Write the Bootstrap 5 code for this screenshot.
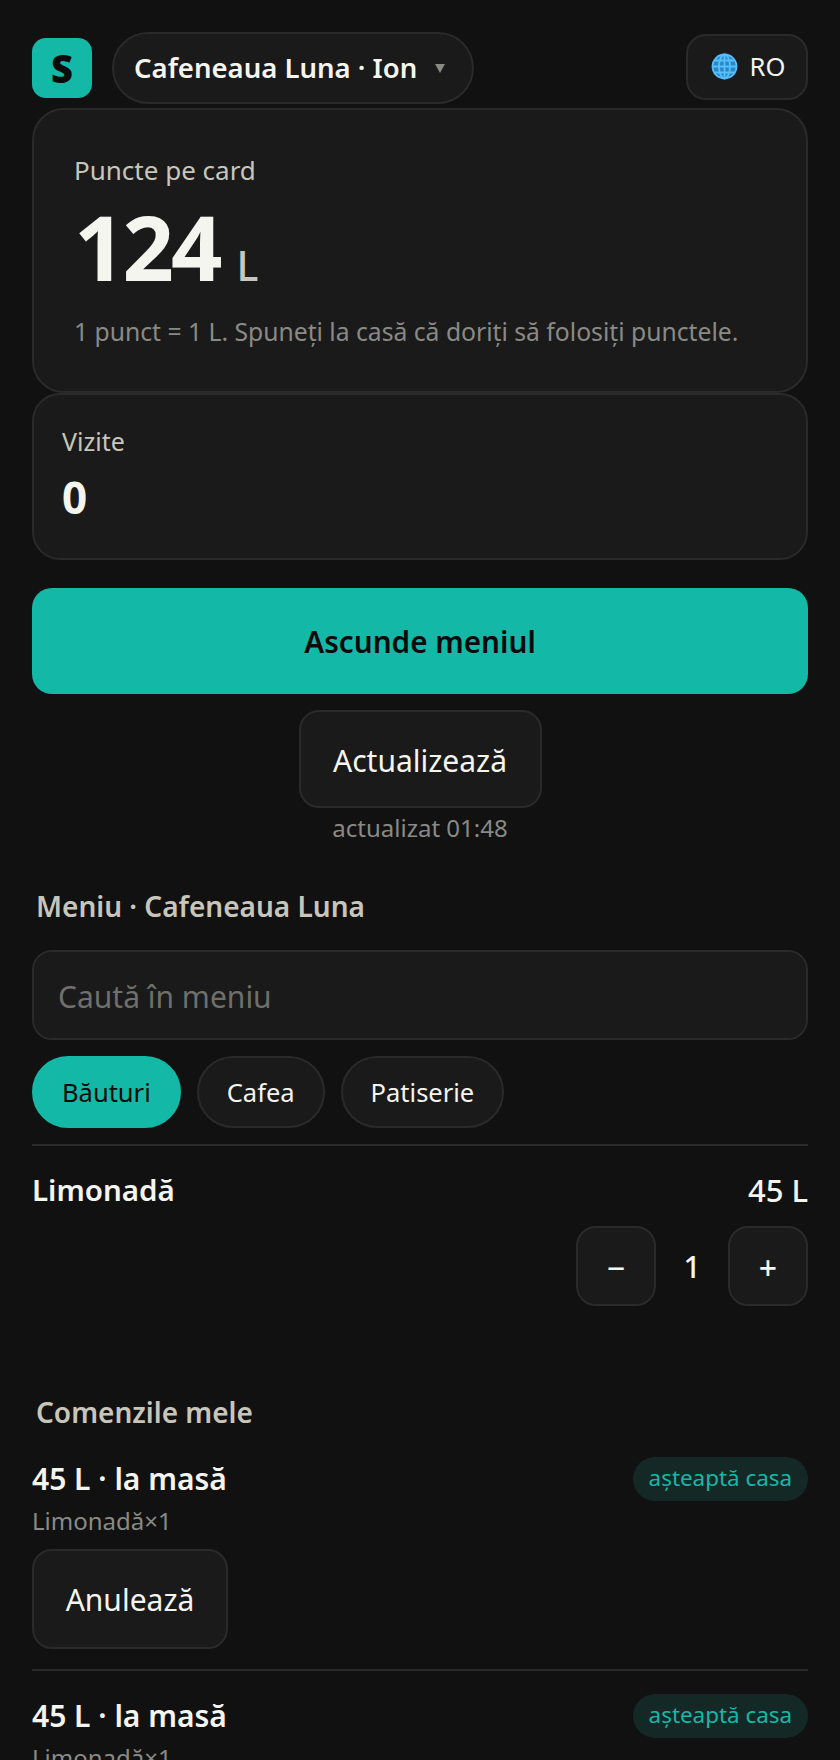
<!DOCTYPE html>
<html lang="ro">
<head>
  <meta charset="UTF-8">
  <meta name="viewport" content="width=device-width, initial-scale=1.0">
  <title>Cafeneaua Luna</title>
  <link href="https://cdn.jsdelivr.net/npm/bootstrap@5.3.0/dist/css/bootstrap.min.css" rel="stylesheet">
  <style>
    html, body { height: 1760px; overflow: hidden; }
    body {
      background-color: #111111;
      color: #f5f5f0;
      font-family: "Noto Sans", "Open Sans", sans-serif;
      font-size: 28px;
      padding: 32px 32px 0;
    }
    .app-logo {
      width: 60px; height: 60px;
      border-radius: 14px;
      background-color: #14b8a6;
      color: #0b0b0b;
      font-size: 38px; font-weight: 900;
      line-height: 60px;
      text-align: center;
    }
    .venue-pill {
      height: 72px; width: 362px;
      margin-left: 20px;
      padding: 0 20px;
      border: 2px solid #2a2a2a;
      border-radius: 36px;
      background-color: #1a1a1a;
      color: #f5f5f0;
      font-size: 27.5px; font-weight: 600;
      gap: 18px;
    }
    .venue-caret {
      width: 0; height: 0;
      border-left: 5px solid transparent;
      border-right: 5px solid transparent;
      border-top: 9px solid #8a8a85;
    }
    .lang-btn {
      height: 66px; width: 122px;
      margin-bottom: 3px;
      padding-left: 14px;
      gap: 12px;
      border: 2px solid #2a2a2a;
      border-radius: 20px;
      background-color: #1a1a1a;
      color: #f5f5f0;
      font-size: 25.5px;
    }
    .panel {
      background-color: #1a1a1a;
      border: 2px solid #2a2a2a;
      color: #f5f5f0;
    }
    .points-panel { height: 285px; margin-top: 4px; padding: 42px 40px; border-radius: 32px; }
    .visits-panel { height: 167px; padding: 28px 28px; border-radius: 28px; }
    .panel-label { color: #c8c6bb; font-size: 25px; line-height: 36px; }
    .points-label { font-size: 26px; }
    .points-row { gap: 17px; margin-top: 12px; }
    .points-value { font-size: 90px; font-weight: 700; line-height: 92px; letter-spacing: -3px; }
    .points-unit { font-size: 41px; font-weight: 500; color: #c8c6bb; line-height: 92px; }
    .points-hint { color: #8a8a85; font-size: 24.7px; line-height: 34px; margin-top: 4px; white-space: nowrap; }
    .visits-value { font-size: 44px; font-weight: 700; line-height: 56px; margin-top: 10px; }
    .main-btn {
      height: 106px;
      margin-top: 28px;
      padding-top: 9px;
      border: 0;
      border-radius: 20px;
      background-color: #14b8a6;
      color: #0b0b0b;
      font-size: 29.7px; font-weight: 600;
    }
    .dark-btn {
      border: 2px solid #2a2a2a;
      border-radius: 20px;
      background-color: #1a1a1a;
      color: #f5f5f0;
      font-size: 30px;
    }
    .refresh-btn { height: 98px; width: 243px; margin-top: 16px; padding-top: 8px; }
    .refresh-time { color: #8a8a85; font-size: 24px; line-height: 34px; margin-top: 3px; }
    .section-title { color: #c8c6bb; font-size: 28px; font-weight: 600; line-height: 40px; padding-left: 4px; }
    .menu-title { margin-top: 41px; }
    .menu-search {
      height: 90px;
      margin-top: 24px;
      padding: 3px 24px 0;
      border: 2px solid #2a2a2a;
      border-radius: 20px;
      background-color: #1a1a1a;
      color: #f5f5f0;
      font-size: 30px;
    }
    .menu-search::placeholder { color: #6f6f6b; }
    .chip-row { margin-top: 16px; gap: 16px; }
    .chip {
      height: 72px;
      padding: 0 28px;
      border: 2px solid #2a2a2a;
      border-radius: 36px;
      background-color: #1a1a1a;
      color: #f5f5f0;
      font-size: 25.5px;
    }
    .chip-on { background-color: #14b8a6; border-color: #14b8a6; color: #0b0b0b; }
    .line { border-top: 2px solid #2a2a2a; opacity: 1; margin: 0; }
    .item-name { font-size: 29.5px; font-weight: 600; line-height: 40px; }
    .item-price { font-size: 31px; font-weight: 500; line-height: 40px; }
    .order-name { font-size: 30px; font-weight: 600; line-height: 40px; }
    .qty-btn { width: 80px; height: 80px; padding: 4px 0 0; font-size: 32px; font-weight: 500; line-height: 1; }
    .qty-val { width: 72px; text-align: center; font-size: 30px; font-weight: 500; }
    .state-tag {
      height: 44px;
      padding: 0 16px;
      border-radius: 22px;
      background-color: #142825;
      color: #14b8a6;
      font-size: 22.4px;
      line-height: 42px;
    }
    .order-sub { color: #8a8a85; font-size: 24px; line-height: 34px; margin-top: 3px; }
    .cancel-btn { width: 196px; height: 100px; margin-top: 11px; }
    .menu-line { margin-top: 16px; }
    .item-head { margin-top: 24px; }
    .qty-row { margin-top: 16px; }
    .orders-title { margin-top: 86px; }
    .order-one { margin-top: 25px; }
    .order-line { margin-top: 20px; }
    .order-two { margin-top: 23px; }
  </style>
</head>
<body>
  <div class="d-flex align-items-center">
    <div class="app-logo">S</div>
    <button class="venue-pill btn d-flex align-items-center" type="button">
      <span>Cafeneaua Luna · Ion</span>
      <span class="venue-caret"></span>
    </button>
    <button class="lang-btn btn d-flex align-items-center justify-content-center ms-auto" type="button">
      <svg width="27" height="27" viewBox="0 0 27 27" fill="none" stroke="#55bfff" stroke-width="1.8">
        <circle cx="13.5" cy="13.5" r="12" fill="#2a86c4"/>
        <ellipse cx="13.5" cy="13.5" rx="5.5" ry="12"/>
        <path d="M13.5 1.5v24M1.5 13.5h24M3.4 7.5h20.2M3.4 19.5h20.2"/>
      </svg>
      <span>RO</span>
    </button>
  </div>

  <div class="panel points-panel">
    <div class="panel-label points-label">Puncte pe card</div>
    <div class="points-row d-flex align-items-baseline">
      <span class="points-value">124</span>
      <span class="points-unit">L</span>
    </div>
    <div class="points-hint">1 punct = 1 L. Spuneți la casă că doriți să folosiți punctele.</div>
  </div>
  <div class="panel visits-panel">
    <div class="panel-label">Vizite</div>
    <div class="visits-value">0</div>
  </div>

  <button class="main-btn btn w-100" type="button">Ascunde meniul</button>
  <div class="text-center">
    <button class="dark-btn refresh-btn btn" type="button">Actualizează</button>
    <div class="refresh-time">actualizat 01:48</div>
  </div>

  <div class="section-title menu-title">Meniu · Cafeneaua Luna</div>
  <input class="menu-search form-control" type="text" placeholder="Caută în meniu">
  <div class="chip-row d-flex">
    <button class="chip chip-on btn" type="button">Băuturi</button>
    <button class="chip btn" type="button">Cafea</button>
    <button class="chip btn" type="button">Patiserie</button>
  </div>
  <hr class="line menu-line">
  <div class="d-flex justify-content-between item-head">
    <span class="item-name">Limonadă</span>
    <span class="item-price">45 L</span>
  </div>
  <div class="d-flex justify-content-end align-items-center qty-row">
    <button class="dark-btn qty-btn btn" type="button">−</button>
    <span class="qty-val">1</span>
    <button class="dark-btn qty-btn btn" type="button">+</button>
  </div>

  <div class="section-title orders-title">Comenzile mele</div>
  <div class="order-one">
    <div class="d-flex justify-content-between align-items-center">
      <span class="order-name">45 L · la masă</span>
      <span class="state-tag">așteaptă casa</span>
    </div>
    <div class="order-sub">Limonadă×1</div>
    <button class="dark-btn cancel-btn btn" type="button">Anulează</button>
  </div>
  <hr class="line order-line">
  <div class="order-two">
    <div class="d-flex justify-content-between align-items-center">
      <span class="order-name">45 L · la masă</span>
      <span class="state-tag">așteaptă casa</span>
    </div>
    <div class="order-sub">Limonadă×1</div>
  </div>
</body>
</html>
